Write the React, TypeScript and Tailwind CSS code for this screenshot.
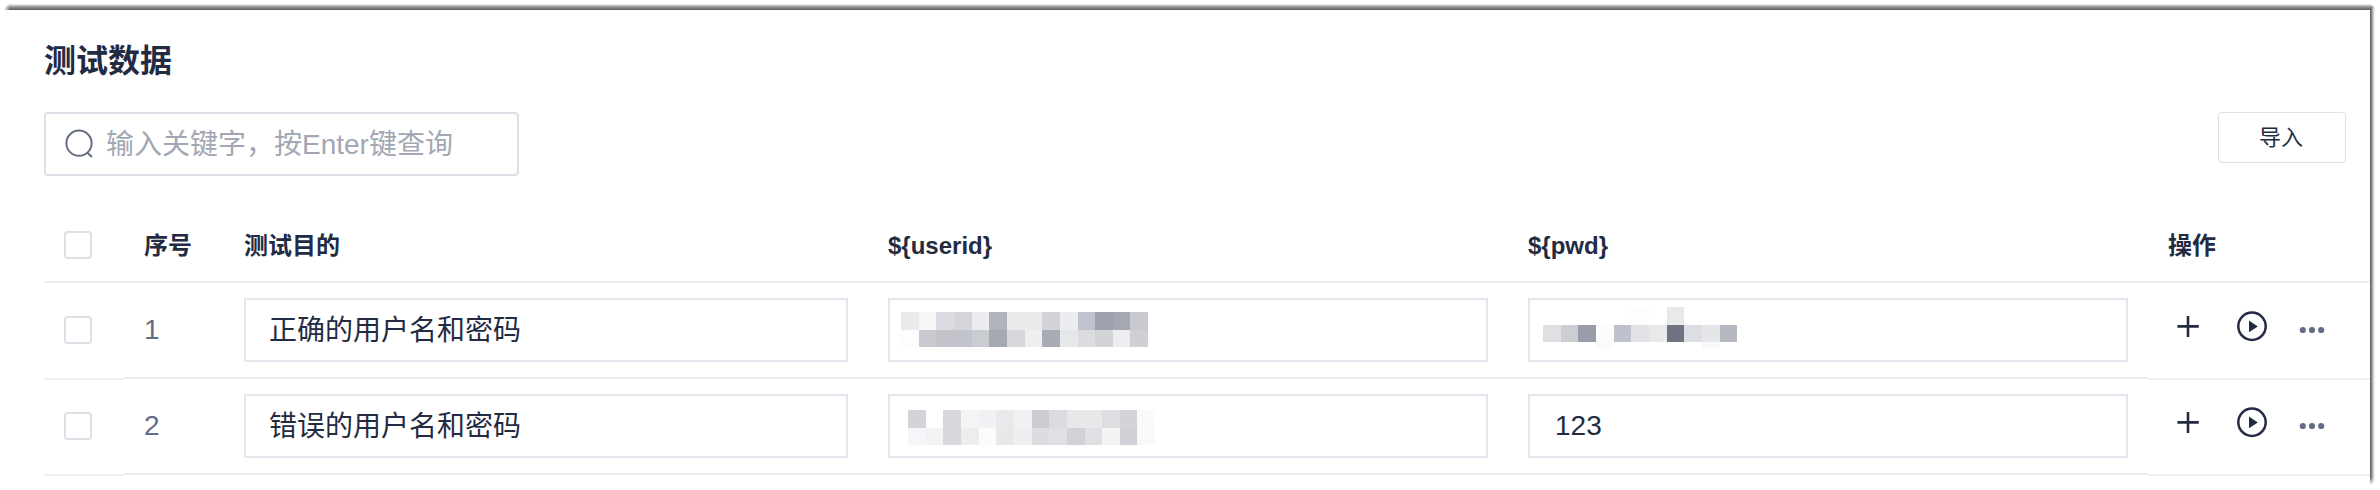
import React from "react";

const USER_1: string[][] = [
  ["#e9eaeb", "#f6f6f6", "#dcdde2", "#d5d6da", "#ebecee", "#b0b3bb", "#eaeaec", "#e9eaeb", "#d2d3d9", "#ebecee", "#c0c3cd", "#9fa2ae", "#a5a7b1", "#c8c9ce"],
  ["#fdfdfd", "#c6c9ce", "#c3c3c9", "#c1c3cd", "#cbccd2", "#a5a9b2", "#d6d7db", "#eeeff1", "#a7abb4", "#e6e7e8", "#dbdce0", "#d3d4da", "#ecedef", "#cecfd5"],
];
const USER_2: string[][] = [
  ["#d3d4d8", "#ffffff", "#d7d8dd", "#f4f4f4", "#f0f1f4", "#e8e9ea", "#f0f1f3", "#cbccd2", "#dbdce0", "#e7e8ea", "#e7e8ea", "#dddee2", "#d3d4d8", "#fafafa"],
  ["#f5f6f9", "#f2f3f5", "#d7d8dc", "#ecedef", "#fbfbfb", "#e7e8ea", "#eeeff1", "#dcdde1", "#dfe0e4", "#d1d2d7", "#dfe0e4", "#f3f3f3", "#d0d1d7", "#f9f9f9"],
];
const PWD_TOP: string[] = ["", "", "", "", "", "#fdfdfd", "", "#e8e9eb", "", "", ""];
const PWD_MID: string[] = ["#dfe0e4", "#cdced3", "#999da9", "#fcfcfc", "#bfc2cc", "#e1e2e6", "#e8e9eb", "#6d7380", "#dddee3", "#e5e6ea", "#b5b8c0"];
const PWD_BOTTOM: string[] = ["", "", "", "#fafafa", "", "", "", "", "", "#f8faf9", ""];

function Strip({ colors, height }: { colors: string[]; height: number }) {
  const unit = 17.65;
  return (
    <div className="flex" style={{ height }}>
      {colors.map((color, i) => (
        <span
          key={i}
          className="shrink-0"
          style={{
            width: Math.round((i + 1) * unit) - Math.round(i * unit),
            backgroundColor: color || "transparent",
          }}
        />
      ))}
    </div>
  );
}

function Mosaic({ rows }: { rows: string[][] }) {
  return (
    <div>
      <Strip colors={rows[0]} height={18} />
      <Strip colors={rows[1]} height={17} />
    </div>
  );
}

function Checkbox() {
  return <span className="block size-7 rounded-[4px] border-2 border-[#dcdfe6] bg-white" />;
}

function Field({ className, children }: { className: string; children: React.ReactNode }) {
  return (
    <div className={`flex h-16 w-full border-2 border-[#e3e7ed] bg-white text-[28px] text-[#232b42] ${className}`}>
      {children}
    </div>
  );
}

function Actions() {
  return (
    <svg width="222" height="95" viewBox="0 0 222 95" fill="none" className="block">
      <path d="M29.4 43.4h21.4M40 33v21" stroke="#232b42" strokeWidth="2.6" />
      <circle cx="104" cy="43.3" r="13.7" stroke="#232b42" strokeWidth="2.5" />
      <path d="M101 37.6v11.6l8.8-5.8z" fill="#232b42" />
      <g fill="#656d84">
        <circle cx="154.8" cy="47" r="3.1" />
        <circle cx="164" cy="47" r="3.1" />
        <circle cx="173.2" cy="47" r="3.1" />
      </g>
    </svg>
  );
}

function Frame() {
  return (
    <svg className="absolute left-0 top-0" width="2380" height="490" fill="none">
      <defs>
        <linearGradient id="fadeLeft" gradientUnits="userSpaceOnUse" x1="4" y1="0" x2="10" y2="0">
          <stop offset="0" stopColor="#fff" />
          <stop offset="1" stopColor="#fff" stopOpacity="0" />
        </linearGradient>
        <linearGradient id="fadeBottom" gradientUnits="userSpaceOnUse" x1="0" y1="478" x2="0" y2="485">
          <stop offset="0" stopColor="#fff" stopOpacity="0" />
          <stop offset="1" stopColor="#fff" />
        </linearGradient>
      </defs>
      <path d="M8 4.5H2371" stroke="#e6e6e6" />
      <path d="M7 5.5H2372" stroke="#c4c4c4" />
      <path d="M6 6.5H2373" stroke="#a3a3a3" />
      <path d="M5 7.5H2372" stroke="#8b8b8b" />
      <path d="M5 8.5H2371" stroke="#777777" />
      <path d="M4 9.5H2371" stroke="#666666" />
      <path d="M2370.5 9V485" stroke="#666666" />
      <path d="M2371.5 8V485" stroke="#858585" />
      <path d="M2372.5 7V484" stroke="#adadad" />
      <path d="M2373.5 6V483" stroke="#d4d4d4" />
      <path d="M2374.5 7V482" stroke="#efefef" />
      <rect x="3" y="3" width="7" height="8" fill="url(#fadeLeft)" />
      <rect x="2370" y="478" width="6" height="8" fill="url(#fadeBottom)" />
    </svg>
  );
}

const GRID = "grid grid-cols-[80px_100px_644px_640px_640px_222px]";

function Row({ index, purpose, user, pwd }: { index: number; purpose: string; user: React.ReactNode; pwd: React.ReactNode }) {
  const cell = "h-24 border-b-2 border-[#ebeef4] px-5 pt-[15px]";
  return (
    <div className={`${GRID} h-24`}>
      <div className="h-[97px] border-b-2 border-[#ebeef4] pl-5 pt-[33px]">
        <Checkbox />
      </div>
      <div className="h-24 border-b-2 border-[#ebeef4] pl-5 pt-[31px] text-[28px] leading-8 text-[#656d84]">{index}</div>
      <div className={cell}>
        <Field className="items-center pl-[23px] pt-0.5">{purpose}</Field>
      </div>
      <div className={cell}>{user}</div>
      <div className={cell}>{pwd}</div>
      <div className="h-[97px] border-b-2 border-[#ebeef4]">
        <Actions />
      </div>
    </div>
  );
}

export default function App() {
  return (
    <div className="relative flex h-[490px] w-[2380px] flex-col overflow-hidden bg-white pl-11 font-['Liberation_Sans','Noto_Sans_CJK_SC',sans-serif] text-[#232b42]">
      <Frame />

      <h1 className="mt-[37px] h-12 text-[32px] font-bold leading-[48px]">测试数据</h1>

      <div className="mt-[27px] flex h-16 w-[2302px] items-start justify-between">
        <div className="flex h-16 w-[475px] items-center rounded-[4px] border-2 border-[#dcdfe6] pl-[19px]">
          <svg width="30" height="30" viewBox="0 0 30 30" fill="none" stroke="#656d84" strokeWidth="2">
            <ellipse cx="14" cy="14.2" rx="12.6" ry="12.6" />
            <path d="M22 23.4l5 4.6" />
          </svg>
          <span className="ml-[11px] pt-0.5 text-[28px] text-[#a2a7b4]">输入关键字，按Enter键查询</span>
        </div>
        <button className="h-[51px] w-32 rounded-[4px] border border-[#dcdfe6] pr-0.5 text-[22px]">导入</button>
      </div>

      <div className="mt-6 w-[2326px]">
        <div className={`${GRID} h-[83px] border-b-2 border-[#ebeef4] text-2xl font-bold`}>
          <div className="pl-5 pt-[31px]">
            <Checkbox />
          </div>
          <div className="pl-5 pt-[30px]">序号</div>
          <div className="pl-5 pt-[30px]">测试目的</div>
          <div className="pl-5 pt-[30px]">{"${userid}"}</div>
          <div className="pl-5 pt-[30px]">{"${pwd}"}</div>
          <div className="pl-5 pt-[30px]">操作</div>
        </div>
        <Row
          index={1}
          purpose="正确的用户名和密码"
          user={<Field className="pl-[11px] pt-3"><Mosaic rows={USER_1} /></Field>}
          pwd={
            <Field className="pl-[13px] pt-[7px]">
              <div>
                <Strip colors={PWD_TOP} height={18} />
                <Strip colors={PWD_MID} height={17} />
                <Strip colors={PWD_BOTTOM} height={6} />
              </div>
            </Field>
          }
        />
        <Row
          index={2}
          purpose="错误的用户名和密码"
          user={<Field className="pl-[18px] pt-[14px]"><Mosaic rows={USER_2} /></Field>}
          pwd={<Field className="items-center pl-[25px]">123</Field>}
        />
      </div>
    </div>
  );
}
